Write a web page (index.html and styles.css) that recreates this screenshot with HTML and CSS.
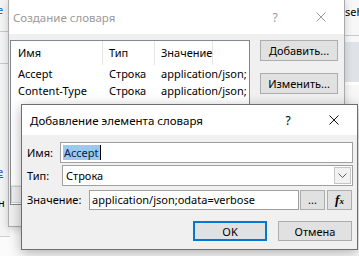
FILE: index.html
```html
<!DOCTYPE html>
<html lang="ru">
<head>
    <meta charset="UTF-8">
    <title>Добавление элемента словаря</title>
    <link rel="stylesheet" href="styles.css">
</head>
<body>
    <div class="desk">
        <!-- window behind both dialogs -->
        <div class="bg-app">
            <div class="bg-left">
                <span class="bg-link">e</span>
                <div class="bg-rule"></div>
                <div class="bg-rule"></div>
                <span class="bg-link lower">e</span>
                <span class="bg-char">н</span>
            </div>
            <div class="bg-right">
                <span class="bg-word">seh</span>
                <div class="bg-rule"></div>
                <div class="bg-band"></div>
            </div>
        </div>

        <div class="win outer">
            <div class="titlebar inactive">
                <span class="title">Создание словаря</span>
                <span class="cap">?</span>
                <span class="cap">
                    <svg width="10" height="10" viewBox="0 0 10 10"><path d="M0.5 0.5L9.5 9.5M9.5 0.5L0.5 9.5" stroke="#9a9a9a" stroke-width="1"/></svg>
                </span>
            </div>
            <div class="win-body outer-body">
                <div class="listview">
                    <div class="lv-head">
                        <span class="c1">Имя</span>
                        <span class="c2">Тип</span>
                        <span class="c3">Значение</span>
                    </div>
                    <div class="lv-row">
                        <span class="c1">Accept</span>
                        <span class="c2">Строка</span>
                        <span class="c3">application/json;</span>
                    </div>
                    <div class="lv-row">
                        <span class="c1">Content-Type</span>
                        <span class="c2">Строка</span>
                        <span class="c3">application/json;</span>
                    </div>
                    <div class="lv-fill"></div>
                    <div class="hscroll"><span class="sb-btn">&#9666;</span></div>
                </div>
                <div class="side-buttons">
                    <button class="btn">Добавить...</button>
                    <button class="btn">Изменить...</button>
                    <!-- third button sits under the child dialog -->
                    <button class="btn"></button>
                </div>
            </div>
        </div>

        <div class="win inner">
            <div class="titlebar">
                <span class="title">Добавление элемента словаря</span>
                <span class="cap">?</span>
                <span class="cap">
                    <svg width="10" height="10" viewBox="0 0 10 10"><path d="M0.5 0.5L9.5 9.5M9.5 0.5L0.5 9.5" stroke="#111" stroke-width="1"/></svg>
                </span>
            </div>
            <div class="win-body inner-body">
                <div class="field">
                    <label class="lbl lbl-name">Имя:</label>
                    <div class="textbox grow"><span class="sel">Accept</span><span class="caret"></span></div>
                </div>
                <div class="field">
                    <label class="lbl lbl-type">Тип:</label>
                    <div class="combo grow">
                        <span class="combo-text">Строка</span>
                        <span class="drop">
                            <svg width="9" height="5" viewBox="0 0 9 5"><path d="M0.5 0.5L4.5 4.5L8.5 0.5" fill="none" stroke="#606060" stroke-width="1"/></svg>
                        </span>
                    </div>
                </div>
                <div class="field">
                    <label class="lbl lbl-value">Значение:</label>
                    <div class="textbox value-box">application/json;odata=verbose</div>
                    <button class="btn small dots">...</button>
                    <button class="btn small fx"><span class="f">f</span><span class="x">x</span></button>
                </div>
                <div class="actions">
                    <button class="btn action default">OK</button>
                    <button class="btn action">Отмена</button>
                </div>
            </div>
        </div>
    </div>
</body>
</html>
```

FILE: styles.css
```css
body {
    margin: 0;
    font-family: 'Noto Sans', sans-serif;
    font-size: 11px;
    color: #000;
    background: #ffffff;
}
.desk {
    position: relative;
    width: 359px;
    height: 256px;
    overflow: hidden;
    background: #fbfbfb;
}

/* background application */
.bg-app {
    position: absolute;
    left: 0;
    top: 0;
    width: 359px;
    height: 236px;
}
.bg-left {
    position: absolute;
    left: 0;
    top: 0;
    width: 10px;
    height: 236px;
    background: #f4f4f4;
    border-bottom: 1px solid #cfcfcf;
}
.bg-link {
    position: absolute;
    left: -3px;
    top: 2px;
    color: #1a5fb4;
}
.bg-link.lower {
    top: 164px;
    text-decoration: underline;
}
.bg-char {
    position: absolute;
    left: -2px;
    top: 195px;
}
.bg-rule {
    height: 1px;
    background: #c8c8c8;
    margin-top: 31px;
}
.bg-right {
    position: absolute;
    left: 344px;
    top: 0;
    width: 15px;
    height: 236px;
    background: #f7f7f7;
}
.bg-word {
    position: absolute;
    left: 1px;
    top: 4px;
}
.bg-right .bg-rule {
    margin-top: 35px;
}
.bg-band {
    height: 40px;
    margin-top: 6px;
    background: #dfe3e8;
    border-bottom: 3px solid #ffffff;
}

/* windows */
.win {
    position: absolute;
    display: flex;
    flex-direction: column;
    background: #f0f0f0;
}
.outer {
    left: 8px;
    top: -1px;
    width: 335px;
    height: 226px;
    border: 1px solid #aaaaaa;
    box-shadow: 0 2px 8px rgba(0, 0, 0, 0.18);
}
.inner {
    left: 21px;
    top: 104px;
    width: 335px;
    height: 144px;
    border: 1px solid #6e6e6e;
    box-shadow: 0 3px 12px rgba(0, 0, 0, 0.3);
}
.titlebar {
    display: flex;
    align-items: center;
    background: #ffffff;
    flex: none;
}
.outer .titlebar {
    height: 34px;
    padding-left: 4px;
}
.inner .titlebar {
    height: 30px;
    padding-left: 8px;
}
.title {
    flex: 1;
    font-size: 11.5px;
}
.inactive .title,
.inactive .cap {
    color: #9a9a9a;
}
.cap {
    width: 46px;
    display: flex;
    justify-content: center;
    align-items: center;
    font-size: 12px;
}
.win-body {
    flex: 1;
}

/* outer dialog */
.outer-body {
    display: flex;
    padding: 6px 6px 0 1px;
    gap: 10px;
}
.listview {
    width: 238px;
    height: 163px;
    background: #ffffff;
    border: 1px solid #828790;
    display: flex;
    flex-direction: column;
    overflow: hidden;
}
.lv-head,
.lv-row {
    display: flex;
    white-space: nowrap;
}
.lv-head {
    height: 24px;
    align-items: center;
}
.lv-head span {
    border-right: 1px solid #e5e5e5;
    height: 24px;
    line-height: 24px;
}
.lv-row {
    height: 17px;
    line-height: 17px;
}
.c1 {
    width: 84px;
    padding-left: 7px;
    flex: none;
}
.c2 {
    width: 45px;
    padding-left: 6px;
    flex: none;
}
.c3 {
    padding-left: 6px;
    flex: none;
}
.lv-row span {
    border-right: 1px solid transparent;
}
.lv-fill {
    flex: 1;
}
.hscroll {
    height: 17px;
    background: #f0f0f0;
    border-top: 1px solid #e8e8e8;
    display: flex;
    margin-bottom: 1px;
}
.sb-btn {
    width: 17px;
    text-align: right;
    font-size: 10px;
    line-height: 17px;
    color: #606060;
    border: 1px solid #d0d0d0;
    box-sizing: border-box;
}
.side-buttons {
    display: flex;
    flex-direction: column;
    gap: 12px;
}
.btn {
    font-family: 'Noto Sans', sans-serif;
    font-size: 11px;
    color: #000;
    background: #e1e1e1;
    border: 1px solid #adadad;
    padding: 0;
    margin: 0;
}
.side-buttons .btn {
    width: 78px;
    height: 21px;
}

/* inner dialog */
.inner-body {
    display: flex;
    flex-direction: column;
    padding: 7px 4px 0 5px;
}
.field {
    display: flex;
    align-items: center;
    height: 21px;
    margin-bottom: 2px;
}
.field:nth-child(2) {
    margin-bottom: 3px;
}
.lbl {
    flex: none;
}
.lbl-name {
    width: 33px;
}
.lbl-type {
    width: 35px;
}
.lbl-value {
    width: 62px;
}
.grow {
    flex: 1;
}
.textbox {
    height: 21px;
    box-sizing: border-box;
    background: #ffffff;
    border: 1px solid #a0a0a0;
    display: flex;
    align-items: center;
    padding-left: 2px;
    white-space: nowrap;
}
.sel {
    background: #99c9ef;
    color: #0b1d3a;
    line-height: 15px;
    padding: 0 1px;
}
.caret {
    width: 1px;
    height: 15px;
    background: #000;
}
.combo {
    height: 21px;
    box-sizing: border-box;
    margin-left: 0;
    background: #ffffff;
    border: 1px solid #a0a0a0;
    display: flex;
    align-items: center;
    padding: 0 1px 0 3px;
}
.combo-text {
    flex: 1;
}
.drop {
    width: 17px;
    height: 17px;
    box-sizing: border-box;
    border: 1px solid #c6c6c6;
    background: #f2f2f2;
    display: flex;
    align-items: center;
    justify-content: center;
}
.value-box {
    width: 210px;
    height: 20px;
    flex: none;
}
.small {
    width: 25px;
    height: 20px;
    box-sizing: border-box;
}
.dots {
    margin-left: 1px;
    line-height: 12px;
}
.fx {
    margin-left: 2px;
    font-family: 'Liberation Serif', serif;
    font-style: italic;
    font-weight: bold;
    font-size: 13px;
}
.fx .x {
    font-size: 9px;
}
.actions {
    display: flex;
    justify-content: flex-end;
    gap: 11px;
    margin-top: 9px;
    padding-right: 1px;
}
.action {
    width: 74px;
    height: 20px;
    box-sizing: border-box;
}
.default {
    border: 2px solid #0078d7;
}
```
